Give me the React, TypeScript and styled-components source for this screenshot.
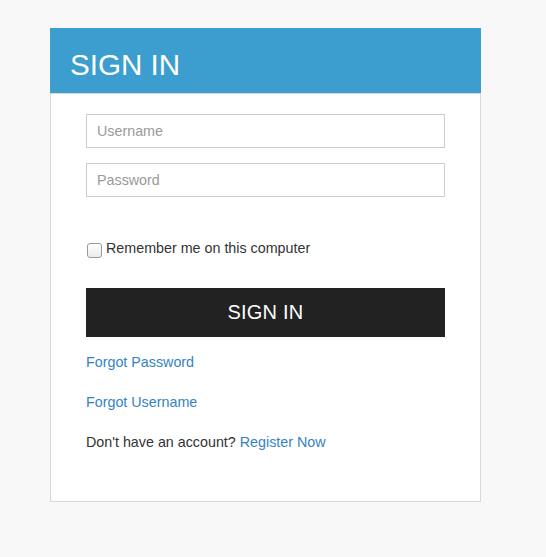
import React from "react";
import styled, { createGlobalStyle } from "styled-components";

const GlobalStyle = createGlobalStyle`
  html, body {
    margin: 0;
    padding: 0;
    background-color: #f8f8f8;
    font-family: "Liberation Sans", Arial, sans-serif;
  }
  * {
    box-sizing: border-box;
  }
`;

function App() {
  return (
    <Page>
      <GlobalStyle />
      <Card>
        <Header>SIGN IN</Header>
        <Body>
          <Input type="text" placeholder="Username" />
          <Input type="password" placeholder="Password" />
          <RememberRow>
            <Checkbox type="checkbox" />
            <span>Remember me on this computer</span>
          </RememberRow>
          <SubmitButton type="button">SIGN IN</SubmitButton>
          <LinkLine>
            <Link href="#">Forgot Password</Link>
          </LinkLine>
          <LinkLine>
            <Link href="#">Forgot Username</Link>
          </LinkLine>
          <LinkLine>
            Don't have an account? <Link href="#">Register Now</Link>
          </LinkLine>
        </Body>
      </Card>
    </Page>
  );
}

const Page = styled.div`
  min-height: 557px;
  padding: 28px 0 0 50px;
`;

const Card = styled.div`
  width: 431px;
`;

const Header = styled.div`
  height: 65px;
  background-color: #3b9ecf;
  color: #ffffff;
  font-size: 29.6px;
  line-height: 33px;
  padding: 20px 20px 0;
`;

const Body = styled.div`
  background-color: #ffffff;
  border: 1px solid #d8d8d8;
  padding: 20px 35px 49px;
  display: flex;
  flex-direction: column;
`;

const Input = styled.input`
  width: 100%;
  height: 34px;
  border: 1px solid #cccccc;
  padding: 0 10px;
  font-family: "Liberation Sans", Arial, sans-serif;
  font-size: 14.3px;
  color: #333333;
  outline: none;
  margin: 0 0 15px;

  &::placeholder {
    color: #999999;
  }
`;

const RememberRow = styled.label`
  display: flex;
  align-items: flex-start;
  margin-top: 26px;
  font-size: 14.3px;
  line-height: 20px;
  color: #333333;
`;

const Checkbox = styled.input`
  appearance: none;
  width: 15px;
  height: 15px;
  margin: 5px 4px 0 1px;
  border: 1px solid #9a9a9a;
  border-radius: 3px;
  background: linear-gradient(#ffffff, #ececec);
`;

const SubmitButton = styled.button`
  margin-top: 30px;
  height: 49px;
  width: 100%;
  border: none;
  background-color: #222222;
  color: #ffffff;
  font-family: "Liberation Sans", Arial, sans-serif;
  font-size: 20px;
  letter-spacing: 0.2px;
  cursor: pointer;
`;

const LinkLine = styled.div`
  margin-top: 20px;
  font-size: 14.3px;
  line-height: 20px;
  color: #333333;

  &:first-of-type {
    margin-top: 15px;
  }
`;

const Link = styled.a`
  color: #3582c4;
  text-decoration: none;
`;

export default App;
